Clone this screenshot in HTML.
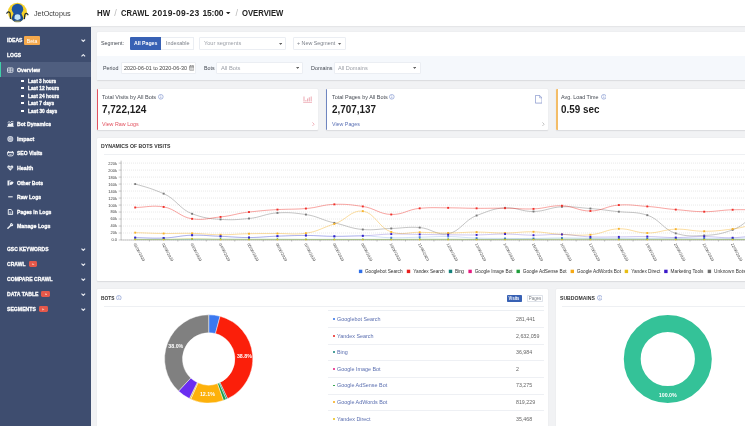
<!DOCTYPE html>
<html><head><meta charset="utf-8"><title>JetOctopus - Overview</title>
<style>
html,body{margin:0;padding:0;}
body{width:745px;height:426px;overflow:hidden;position:relative;background:#f1f2f4;font-family:"Liberation Sans",sans-serif;}
.b{position:absolute;display:block;}
.t{position:absolute;white-space:nowrap;}
#app{position:absolute;left:0;top:0;width:745px;height:426px;transform:translateZ(0);filter:blur(.35px);}
</style></head><body><div id="app">
<div class="b" style="left:-10.00px;top:-10.00px;width:765.00px;height:36.30px;background:#fff;box-shadow:0 .6px 1.600px rgba(40,40,50,.13);z-index:5;"></div>
<svg class="b" style="left:5px;top:1px;z-index:6" width="26" height="25" viewBox="0 0 26 25">
<circle cx="12.4" cy="11.2" r="9.5" fill="#f6d22b"/>
<path d="M1.8 12.3c.8-2 3.2-1.800 3.400.5l.2 4.700" fill="none" stroke="#1d2a33" stroke-width="1.150" stroke-linecap="round"/>
<path d="M23 13.800c-.8-2-3.100-1.800-3.300.5l-.2 3.300" fill="none" stroke="#1d2a33" stroke-width="1.150" stroke-linecap="round"/>
<path d="M6.400 17.400c1.500-3.300 2.200-4.700 2.800-5.800h6.600c.6 1.100 1.300 2.500 2.800 5.800-1.600 2.800-3.800 3.700-6.100 3.700s-4.500-.9-6.100-3.700z" fill="#1c4a8e"/>
<ellipse cx="12.500" cy="8.300" rx="5.700" ry="5.600" fill="#1e55a3"/>
<path d="M9.600 15.400c.2-1.300 1-2.100 2.900-2.100s2.700.8 2.900 2.100l.2 2.200c-.8.900-1.900 1.300-3.100 1.300s-2.300-.4-3.100-1.300z" fill="#c2e4f8"/>
<ellipse cx="12.500" cy="20.400" rx="3.600" ry=".8" fill="#8a8f6a"/>
</svg>
<span class="t" style="top:9.68px;font-size:7.45px;line-height:8.94px;color:#3c3c3c;left:33.80px;transform:scaleX(0.971);transform-origin:0 50%;z-index:6;">JetOctopus</span>
<span class="t" style="top:8.00px;font-size:8.50px;line-height:10.20px;color:#222;font-weight:bold;left:97.30px;transform:scaleX(0.925);transform-origin:0 50%;z-index:6;">HW</span>
<span class="t" style="top:7.70px;font-size:9.00px;line-height:10.80px;color:#bbb;left:114.30px;z-index:6;">/</span>
<span class="t" style="top:8.00px;font-size:8.50px;line-height:10.20px;color:#222;font-weight:bold;left:121.30px;transform:scaleX(0.902);transform-origin:0 50%;z-index:6;">CRAWL</span>
<span class="t" style="top:8.00px;font-size:8.50px;line-height:10.20px;color:#222;font-weight:bold;letter-spacing:0.391px;left:152.30px;z-index:6;">2019-09-23</span>
<span class="t" style="top:8.00px;font-size:8.50px;line-height:10.20px;color:#222;font-weight:bold;letter-spacing:-0.210px;left:202.50px;z-index:6;">15:00</span>
<svg class="b" style="left:226.40px;top:11.90px;z-index:6;" width="4.4" height="2.4" viewBox="0 0 4.4 2.4"><path d="M0 0h4.400L2.200 2.400z" fill="#222"/></svg>
<span class="t" style="top:7.70px;font-size:9.00px;line-height:10.80px;color:#bbb;left:235.40px;z-index:6;">/</span>
<span class="t" style="top:8.00px;font-size:8.50px;line-height:10.20px;color:#222;font-weight:bold;left:242.00px;transform:scaleX(0.905);transform-origin:0 50%;z-index:6;">OVERVIEW</span>
<div class="b" style="left:-10.00px;top:26.70px;width:100.60px;height:420.00px;background:#3e4d6f;z-index:4;"></div>
<span class="t" style="top:37.15px;font-size:5.83px;line-height:7.00px;color:#fff;font-weight:bold;-webkit-text-stroke:0.3px #fff;left:7.00px;transform:scaleX(0.870);transform-origin:0 50%;z-index:6;">IDEAS</span>
<svg class="b" style="left:81.10px;top:39.10px;z-index:6;" width="4.6" height="3" viewBox="0 0 4.6 3"><path d="M.5.7L2.300 2.400L4.100.7" fill="none" stroke="#eef1f6" stroke-width="1.150"/></svg>
<div class="b" style="left:23.90px;top:36.10px;width:15.70px;height:8.50px;background:#f5a94d;border-radius:1px;z-index:6;"></div>
<span class="t" style="top:37.53px;font-size:5.36px;line-height:6.43px;color:#fff;left:-68.20px;width:200px;text-align:center;transform:scaleX(0.952);transform-origin:50% 50%;z-index:7;">Beta</span>
<span class="t" style="top:52.12px;font-size:5.72px;line-height:6.87px;color:#fff;font-weight:bold;-webkit-text-stroke:0.3px #fff;left:7.00px;transform:scaleX(0.870);transform-origin:0 50%;z-index:6;">LOGS</span>
<svg class="b" style="left:81.10px;top:54.00px;z-index:6;" width="4.6" height="3" viewBox="0 0 4.6 3"><path d="M.5 2.400L2.300.7L4.100 2.400" fill="none" stroke="#eef1f6" stroke-width="1.150"/></svg>
<div class="b" style="left:-10.00px;top:62.20px;width:100.60px;height:15.10px;background:#4f5e7f;z-index:5;"></div>
<div class="b" style="left:-10.00px;top:62.20px;width:11.20px;height:15.10px;background:#3fd0a8;z-index:6;"></div>
<svg class="b" style="left:7.00px;top:67.00px;z-index:6;" width="6.8" height="6" viewBox="0 0 6.8 6"><rect x=".45" y=".95" width="5.500" height="4.300" rx=".5" fill="none" stroke="#eef1f6" stroke-width=".8"/><path d="M.4 3.100h5.600" stroke="#eef1f6" stroke-width=".7"/><path d="M3.200.9v4.400" stroke="#eef1f6" stroke-width=".7"/></svg>
<span class="t" style="top:66.77px;font-size:5.97px;line-height:7.17px;color:#fff;font-weight:bold;-webkit-text-stroke:0.3px #fff;left:16.60px;transform:scaleX(0.870);transform-origin:0 50%;z-index:6;">Overview</span>
<svg class="b" style="left:7.00px;top:121.10px;z-index:6;" width="6.8" height="6" viewBox="0 0 6.8 6"><path d="M.1 5.650h6.700" stroke="#eef1f6" stroke-width=".8"/><path d="M.8 5.300V3.300l1.300-1 1.400.8 1.600-1.500 1.200.7v3z" fill="#eef1f6"/><path d="M.6 1.700L2 .6l1.400.9L5.100.1l1.400.7" fill="none" stroke="#eef1f6" stroke-width=".8"/></svg>
<span class="t" style="top:120.92px;font-size:5.88px;line-height:7.06px;color:#fff;font-weight:bold;-webkit-text-stroke:0.3px #fff;left:16.60px;transform:scaleX(0.870);transform-origin:0 50%;z-index:6;">Bot Dynamics</span>
<svg class="b" style="left:7.00px;top:135.80px;z-index:6;" width="6.8" height="6" viewBox="0 0 6.8 6"><circle cx="3.300" cy="3" r="3" fill="#cdd3df"/><circle cx="3.300" cy="3" r="1.700" fill="none" stroke="#7885a0" stroke-width=".55"/><circle cx="3.300" cy="3" r=".55" fill="#7885a0"/></svg>
<span class="t" style="top:135.47px;font-size:6.14px;line-height:7.36px;color:#fff;font-weight:bold;-webkit-text-stroke:0.3px #fff;left:16.60px;transform:scaleX(0.870);transform-origin:0 50%;z-index:6;">Impact</span>
<svg class="b" style="left:7.00px;top:150.60px;z-index:6;" width="6.8" height="6" viewBox="0 0 6.8 6"><path d="M.6 1.100h5.700v2.400c0 .8-.6 1.400-1.400 1.400H2c-.8 0-1.400-.6-1.400-1.400z" fill="none" stroke="#eef1f6" stroke-width=".9"/><path d="M.6 1.100h5.700v1H.6z" fill="#eef1f6"/><path d="M1.500 0v1.200M5.400 0v1.200" stroke="#eef1f6" stroke-width=".9"/><path d="M2.200 3.100c.7.600 1.800.600 2.500 0" fill="none" stroke="#eef1f6" stroke-width=".65"/></svg>
<span class="t" style="top:150.47px;font-size:5.80px;line-height:6.96px;color:#fff;font-weight:bold;-webkit-text-stroke:0.3px #fff;left:16.60px;transform:scaleX(0.870);transform-origin:0 50%;z-index:6;">SEO Visits</span>
<svg class="b" style="left:7.00px;top:164.60px;z-index:6;" width="6.8" height="6" viewBox="0 0 6.8 6"><path d="M3.300 5.700L.7 3.100C-.3 1.900.5.300 1.800.4c.7 0 1.200.5 1.500 1 .3-.5.800-1 1.500-1 1.300-.1 2.100 1.500 1.100 2.700z" fill="#e3e7ee"/><path d="M1.300 2.900h1.200l.5-.9.700 1.600.5-.7h1" fill="none" stroke="#3c4b6c" stroke-width=".4"/></svg>
<span class="t" style="top:164.27px;font-size:6.13px;line-height:7.36px;color:#fff;font-weight:bold;-webkit-text-stroke:0.3px #fff;left:16.60px;transform:scaleX(0.870);transform-origin:0 50%;z-index:6;">Health</span>
<svg class="b" style="left:7.00px;top:179.70px;z-index:6;" width="6.8" height="6" viewBox="0 0 6.8 6"><path d="M.5.500h1.900v5H.5z" fill="#eef1f6"/><path d="M2.800 3c.9-1.700 2.700-2 3.800-.8-.5 1.900-2.100 3-3.800 2.600z" fill="#eef1f6"/><path d="M1.900 1.200c.8-.7 1.500-.7 2.200 0" fill="none" stroke="#eef1f6" stroke-width=".6"/></svg>
<span class="t" style="top:179.56px;font-size:5.81px;line-height:6.97px;color:#fff;font-weight:bold;-webkit-text-stroke:0.3px #fff;left:16.60px;transform:scaleX(0.870);transform-origin:0 50%;z-index:6;">Other Bots</span>
<svg class="b" style="left:7.00px;top:194.40px;z-index:6;" width="6.8" height="6" viewBox="0 0 6.8 6"><path d="M1.200 2.800h4.500" stroke="#dfe3ea" stroke-width="1.200"/></svg>
<span class="t" style="top:194.23px;font-size:5.87px;line-height:7.04px;color:#fff;font-weight:bold;-webkit-text-stroke:0.3px #fff;left:16.60px;transform:scaleX(0.870);transform-origin:0 50%;z-index:6;">Raw Logs</span>
<svg class="b" style="left:7.00px;top:209.00px;z-index:6;" width="6.8" height="6" viewBox="0 0 6.8 6"><path d="M1.300.500h2.700l1.600 1.600v3.500H1.300z" fill="none" stroke="#eef1f6" stroke-width=".95"/><path d="M2.300 3.100h2.300M2.300 4.300h2.300" stroke="#eef1f6" stroke-width=".6"/></svg>
<span class="t" style="top:208.85px;font-size:5.84px;line-height:7.00px;color:#fff;font-weight:bold;-webkit-text-stroke:0.3px #fff;left:16.60px;transform:scaleX(0.870);transform-origin:0 50%;z-index:6;">Pages in Logs</span>
<svg class="b" style="left:7.00px;top:223.40px;z-index:6;" width="6.8" height="6" viewBox="0 0 6.8 6"><path d="M.9 5.200L3.700 2.400" stroke="#eef1f6" stroke-width="1.400" stroke-linecap="round"/><circle cx="4.600" cy="1.700" r="1.600" fill="#eef1f6"/><path d="M4.700 1.600L6.400 -.1" stroke="#3e4d6f" stroke-width=".9"/></svg>
<span class="t" style="top:223.14px;font-size:6.01px;line-height:7.21px;color:#fff;font-weight:bold;-webkit-text-stroke:0.3px #fff;left:16.60px;transform:scaleX(0.870);transform-origin:0 50%;z-index:6;">Manage Logs</span>
<div class="b" style="left:21.30px;top:79.70px;width:2.40px;height:2.30px;background:#fff;z-index:6;"></div>
<span class="t" style="top:77.88px;font-size:5.45px;line-height:6.54px;color:#fff;font-weight:bold;-webkit-text-stroke:0.3px #fff;left:27.80px;transform:scaleX(0.870);transform-origin:0 50%;z-index:6;">Last 3 hours</span>
<div class="b" style="left:21.30px;top:87.20px;width:2.40px;height:2.30px;background:#fff;z-index:6;"></div>
<span class="t" style="top:85.33px;font-size:5.54px;line-height:6.64px;color:#fff;font-weight:bold;-webkit-text-stroke:0.3px #fff;left:27.80px;transform:scaleX(0.870);transform-origin:0 50%;z-index:6;">Last 12 hours</span>
<div class="b" style="left:21.30px;top:94.70px;width:2.40px;height:2.30px;background:#fff;z-index:6;"></div>
<span class="t" style="top:92.83px;font-size:5.54px;line-height:6.64px;color:#fff;font-weight:bold;-webkit-text-stroke:0.3px #fff;left:27.80px;transform:scaleX(0.870);transform-origin:0 50%;z-index:6;">Last 24 hours</span>
<div class="b" style="left:21.30px;top:102.10px;width:2.40px;height:2.30px;background:#fff;z-index:6;"></div>
<span class="t" style="top:100.23px;font-size:5.53px;line-height:6.64px;color:#fff;font-weight:bold;-webkit-text-stroke:0.3px #fff;left:27.80px;transform:scaleX(0.870);transform-origin:0 50%;z-index:6;">Last 7 days</span>
<div class="b" style="left:21.30px;top:109.60px;width:2.40px;height:2.30px;background:#fff;z-index:6;"></div>
<span class="t" style="top:107.68px;font-size:5.61px;line-height:6.73px;color:#fff;font-weight:bold;-webkit-text-stroke:0.3px #fff;left:27.80px;transform:scaleX(0.870);transform-origin:0 50%;z-index:6;">Last 30 days</span>
<span class="t" style="top:246.11px;font-size:5.73px;line-height:6.87px;color:#fff;font-weight:bold;-webkit-text-stroke:0.3px #fff;left:7.00px;transform:scaleX(0.870);transform-origin:0 50%;z-index:6;">GSC KEYWORDS</span>
<svg class="b" style="left:81.10px;top:248.00px;z-index:6;" width="4.6" height="3" viewBox="0 0 4.6 3"><path d="M.5.7L2.300 2.400L4.100.7" fill="none" stroke="#eef1f6" stroke-width="1.150"/></svg>
<span class="t" style="top:260.77px;font-size:5.80px;line-height:6.96px;color:#fff;font-weight:bold;-webkit-text-stroke:0.3px #fff;left:7.00px;transform:scaleX(0.870);transform-origin:0 50%;z-index:6;">CRAWL</span>
<svg class="b" style="left:81.10px;top:262.70px;z-index:6;" width="4.6" height="3" viewBox="0 0 4.6 3"><path d="M.5.7L2.300 2.400L4.100.7" fill="none" stroke="#eef1f6" stroke-width="1.150"/></svg>
<span class="t" style="top:275.94px;font-size:5.85px;line-height:7.02px;color:#fff;font-weight:bold;-webkit-text-stroke:0.3px #fff;left:7.00px;transform:scaleX(0.870);transform-origin:0 50%;z-index:6;">COMPARE CRAWL</span>
<svg class="b" style="left:81.10px;top:277.90px;z-index:6;" width="4.6" height="3" viewBox="0 0 4.6 3"><path d="M.5.7L2.300 2.400L4.100.7" fill="none" stroke="#eef1f6" stroke-width="1.150"/></svg>
<span class="t" style="top:290.90px;font-size:5.91px;line-height:7.09px;color:#fff;font-weight:bold;-webkit-text-stroke:0.3px #fff;left:7.00px;transform:scaleX(0.870);transform-origin:0 50%;z-index:6;">DATA TABLE</span>
<svg class="b" style="left:81.10px;top:292.90px;z-index:6;" width="4.6" height="3" viewBox="0 0 4.6 3"><path d="M.5.7L2.300 2.400L4.100.7" fill="none" stroke="#eef1f6" stroke-width="1.150"/></svg>
<span class="t" style="top:306.10px;font-size:5.92px;line-height:7.11px;color:#fff;font-weight:bold;-webkit-text-stroke:0.3px #fff;left:7.00px;transform:scaleX(0.870);transform-origin:0 50%;z-index:6;">SEGMENTS</span>
<svg class="b" style="left:81.10px;top:308.10px;z-index:6;" width="4.6" height="3" viewBox="0 0 4.6 3"><path d="M.5.7L2.300 2.400L4.100.7" fill="none" stroke="#eef1f6" stroke-width="1.150"/></svg>
<div class="b" style="left:28.50px;top:260.90px;width:8.90px;height:6.00px;background:#e4584b;border-radius:1.400px;z-index:6;"></div>
<svg class="b" style="left:31.80px;top:262.50px;z-index:7;" width="2.8" height="2.8" viewBox="0 0 2.8 2.8"><path d="M.2.200L2.600 1.400L.2 2.600z" fill="#f6b9a6"/></svg>
<div class="b" style="left:41.30px;top:291.10px;width:8.90px;height:6.00px;background:#e4584b;border-radius:1.400px;z-index:6;"></div>
<svg class="b" style="left:44.60px;top:292.70px;z-index:7;" width="2.8" height="2.8" viewBox="0 0 2.8 2.8"><path d="M.2.200L2.600 1.400L.2 2.600z" fill="#f6b9a6"/></svg>
<div class="b" style="left:39.10px;top:306.30px;width:8.90px;height:6.00px;background:#e4584b;border-radius:1.400px;z-index:6;"></div>
<svg class="b" style="left:42.40px;top:307.90px;z-index:7;" width="2.8" height="2.8" viewBox="0 0 2.8 2.8"><path d="M.2.200L2.600 1.400L.2 2.600z" fill="#f6b9a6"/></svg>
<div class="b" style="left:96.80px;top:32.30px;width:650.00px;height:47.70px;background:#fff;box-shadow:0 .4px 1.200px rgba(60,60,70,.13);border-radius:1px;"></div>
<div class="b" style="left:96.80px;top:55.60px;width:650.00px;height:24.40px;background:#f5f8fc;"></div>
<span class="t" style="top:39.77px;font-size:5.80px;line-height:6.96px;color:#41464f;left:100.80px;transform:scaleX(0.926);transform-origin:0 50%;">Segment:</span>
<div class="b" style="left:129.60px;top:37.00px;width:31.80px;height:12.90px;background:#3861b4;border-radius:1px 0 0 1px;"></div>
<span class="t" style="top:39.95px;font-size:6.00px;line-height:7.20px;color:#fff;font-weight:bold;left:133.70px;transform:scaleX(0.866);transform-origin:0 50%;">All Pages</span>
<div class="b" style="left:161.40px;top:37.00px;width:32.70px;height:12.90px;background:#fff;box-sizing:border-box;border:.55px solid #ebeef3;border-left:none;"></div>
<span class="t" style="top:40.07px;font-size:5.80px;line-height:6.96px;color:#7a7f88;left:165.90px;transform:scaleX(0.934);transform-origin:0 50%;">Indexable</span>
<div class="b" style="left:199.30px;top:36.80px;width:86.90px;height:13.00px;background:#fff;box-sizing:border-box;border:.55px solid #ebeef3;border-radius:1px;"></div>
<span class="t" style="top:40.07px;font-size:5.80px;line-height:6.96px;color:#9a9ea6;left:204.10px;transform:scaleX(0.967);transform-origin:0 50%;">Your segments</span>
<svg class="b" style="left:278.50px;top:42.50px;" width="3.2" height="2" viewBox="0 0 3.2 2"><path d="M0 0h3.200L1.600 2z" fill="#666"/></svg>
<div class="b" style="left:292.60px;top:36.80px;width:53.00px;height:13.00px;background:#fff;box-sizing:border-box;border:.55px solid #ebeef3;border-radius:1px;"></div>
<span class="t" style="top:40.07px;font-size:5.80px;line-height:6.96px;color:#7a7f88;left:296.80px;transform:scaleX(0.922);transform-origin:0 50%;">+ New Segment</span>
<svg class="b" style="left:338.40px;top:42.50px;" width="3.2" height="2" viewBox="0 0 3.2 2"><path d="M0 0h3.200L1.600 2z" fill="#666"/></svg>
<span class="t" style="top:64.87px;font-size:5.80px;line-height:6.96px;color:#41464f;left:103.20px;transform:scaleX(0.918);transform-origin:0 50%;">Period</span>
<div class="b" style="left:120.50px;top:61.50px;width:75.70px;height:12.80px;background:#fff;box-sizing:border-box;border:.55px solid #ebeef3;border-radius:1px;"></div>
<span class="t" style="top:64.57px;font-size:5.80px;line-height:6.96px;color:#444;left:124.00px;transform:scaleX(0.935);transform-origin:0 50%;">2020-06-01 to 2020-06-30</span>
<svg class="b" style="left:188.70px;top:65.00px;" width="5.4" height="5.6" viewBox="0 0 5.4 5.6"><rect x=".4" y=".9" width="4.600" height="4.300" rx=".5" fill="none" stroke="#777" stroke-width=".65"/><path d="M.4 2h4.600" stroke="#777" stroke-width=".9"/><path d="M1.500 0v1.300M3.900 0v1.300" stroke="#777" stroke-width=".65"/><path d="M1.100 3.100h3.300M1.100 4.100h3.300" stroke="#777" stroke-width=".5" stroke-dasharray=".7 .5"/></svg>
<span class="t" style="top:64.87px;font-size:5.80px;line-height:6.96px;color:#41464f;left:204.10px;transform:scaleX(0.913);transform-origin:0 50%;">Bots</span>
<div class="b" style="left:216.30px;top:61.50px;width:87.00px;height:12.80px;background:#fff;box-sizing:border-box;border:.55px solid #ebeef3;border-radius:1px;"></div>
<span class="t" style="top:64.87px;font-size:5.80px;line-height:6.96px;color:#9a9ea6;left:221.10px;transform:scaleX(0.992);transform-origin:0 50%;">All Bots</span>
<svg class="b" style="left:295.60px;top:67.00px;" width="3.2" height="2" viewBox="0 0 3.2 2"><path d="M0 0h3.200L1.600 2z" fill="#666"/></svg>
<span class="t" style="top:64.87px;font-size:5.80px;line-height:6.96px;color:#41464f;left:310.80px;transform:scaleX(0.935);transform-origin:0 50%;">Domains</span>
<div class="b" style="left:333.60px;top:61.50px;width:87.00px;height:12.80px;background:#fff;box-sizing:border-box;border:.55px solid #ebeef3;border-radius:1px;"></div>
<span class="t" style="top:64.87px;font-size:5.80px;line-height:6.96px;color:#9a9ea6;left:338.40px;transform:scaleX(0.960);transform-origin:0 50%;">All Domains</span>
<svg class="b" style="left:412.90px;top:67.00px;" width="3.2" height="2" viewBox="0 0 3.2 2"><path d="M0 0h3.200L1.600 2z" fill="#666"/></svg>
<div class="b" style="left:96.70px;top:88.70px;width:221.50px;height:41.50px;background:#fff;box-shadow:0 .4px 1.200px rgba(60,60,70,.13);border-radius:1px;"></div>
<div class="b" style="left:96.70px;top:88.70px;width:1.30px;height:41.50px;background:#e2525f;border-radius:1px 0 0 1px;"></div>
<span class="t" style="top:94.03px;font-size:5.87px;line-height:7.05px;color:#454a53;left:102.30px;transform:scaleX(0.952);transform-origin:0 50%;">Total Visits by All Bots</span>
<svg class="b" style="left:158.40px;top:94.40px;" width="5.6" height="5.6" viewBox="0 0 5.6 5.6"><circle cx="2.8" cy="2.8" r="2.35" fill="none" stroke="#6d84c8" stroke-width=".55"/><path d="M2.8 2.5v1.7" stroke="#6d84c8" stroke-width=".6"/><circle cx="2.8" cy="1.6" r=".38" fill="#6d84c8"/></svg>
<span class="t" style="top:102.54px;font-size:10.68px;line-height:12.81px;color:#1c1c1c;font-weight:bold;left:102.30px;transform:scaleX(0.935);transform-origin:0 50%;">7,722,124</span>
<span class="t" style="top:121.19px;font-size:5.61px;line-height:6.73px;color:#e2525f;left:102.30px;transform:scaleX(0.952);transform-origin:0 50%;">View Raw Logs</span>
<div class="b" style="left:326.10px;top:88.70px;width:222.10px;height:41.50px;background:#fff;box-shadow:0 .4px 1.200px rgba(60,60,70,.13);border-radius:1px;"></div>
<div class="b" style="left:326.10px;top:88.70px;width:1.40px;height:41.50px;background:#6f86c0;border-radius:1px 0 0 1px;"></div>
<span class="t" style="top:94.10px;font-size:5.75px;line-height:6.90px;color:#454a53;left:331.70px;transform:scaleX(0.952);transform-origin:0 50%;">Total Pages by All Bots</span>
<svg class="b" style="left:389.20px;top:94.40px;" width="5.6" height="5.6" viewBox="0 0 5.6 5.6"><circle cx="2.8" cy="2.8" r="2.35" fill="none" stroke="#6d84c8" stroke-width=".55"/><path d="M2.8 2.5v1.7" stroke="#6d84c8" stroke-width=".6"/><circle cx="2.8" cy="1.6" r=".38" fill="#6d84c8"/></svg>
<span class="t" style="top:102.60px;font-size:10.58px;line-height:12.70px;color:#1c1c1c;font-weight:bold;left:331.70px;transform:scaleX(0.935);transform-origin:0 50%;">2,707,137</span>
<span class="t" style="top:121.21px;font-size:5.57px;line-height:6.68px;color:#5a70b5;left:331.70px;transform:scaleX(0.952);transform-origin:0 50%;">View Pages</span>
<div class="b" style="left:556.10px;top:88.70px;width:190.00px;height:41.50px;background:#fff;box-shadow:0 .4px 1.200px rgba(60,60,70,.13);border-radius:1px;"></div>
<div class="b" style="left:556.10px;top:88.70px;width:1.50px;height:41.50px;background:#f3bd68;border-radius:1px 0 0 1px;"></div>
<span class="t" style="top:94.14px;font-size:5.68px;line-height:6.82px;color:#454a53;left:561.20px;transform:scaleX(0.952);transform-origin:0 50%;">Avg. Load Time</span>
<svg class="b" style="left:600.50px;top:94.40px;" width="5.6" height="5.6" viewBox="0 0 5.6 5.6"><circle cx="2.8" cy="2.8" r="2.35" fill="none" stroke="#6d84c8" stroke-width=".55"/><path d="M2.8 2.5v1.7" stroke="#6d84c8" stroke-width=".6"/><circle cx="2.8" cy="1.6" r=".38" fill="#6d84c8"/></svg>
<span class="t" style="top:102.62px;font-size:10.56px;line-height:12.67px;color:#1c1c1c;font-weight:bold;left:561.20px;transform:scaleX(0.935);transform-origin:0 50%;">0.59 sec</span>
<svg class="b" style="left:303.40px;top:95.70px;" width="9.2" height="7" viewBox="0 0 9.2 7"><path d="M.2 6.600h8.800" stroke="#e58c98" stroke-width=".6"/><path d="M1 .5v5M2.900 4v1.500M4.600 2.500v3M6.300 1.300v4.200M8.200.5v5" fill="none" stroke="#e58c98" stroke-width=".75"/></svg>
<svg class="b" style="left:312.30px;top:121.60px;" width="2.8" height="4.4" viewBox="0 0 2.8 4.4"><path d="M.4.400L2.200 2.200L.4 4" fill="none" stroke="#ea95a0" stroke-width=".7"/></svg>
<svg class="b" style="left:535.00px;top:95.10px;" width="7.4" height="8.5" viewBox="0 0 7.4 8.5"><path d="M.4.400h4.200l2.400 2.400v5.300H.4z" fill="none" stroke="#8494cb" stroke-width=".75"/><path d="M4.600.4v2.400h2.400" fill="none" stroke="#8494cb" stroke-width=".6"/></svg>
<svg class="b" style="left:541.80px;top:121.60px;" width="2.8" height="4.4" viewBox="0 0 2.8 4.4"><path d="M.4.400L2.200 2.200L.4 4" fill="none" stroke="#aaa" stroke-width=".7"/></svg>
<div class="b" style="left:96.80px;top:138.30px;width:650.00px;height:142.90px;background:#fff;box-shadow:0 .4px 1.200px rgba(60,60,70,.13);border-radius:1px;"></div>
<span class="t" style="top:142.89px;font-size:5.93px;line-height:7.11px;color:#333;font-weight:bold;left:101.10px;transform:scaleX(0.870);transform-origin:0 50%;">DYNAMICS OF BOTS VISITS</span>
<div class="b" style="left:104.00px;top:153.90px;width:642.00px;height:0.60px;background:#eef0f3;"></div>
<svg class="b" style="left:0;top:0" width="745" height="426" viewBox="0 0 745 426"><path d="M121.1 240.00H745" stroke="#c0c0c0" stroke-width=".5" stroke-dasharray=".7 1.300"/><path d="M118.70 240.00h2.400" stroke="#777" stroke-width=".4"/><text x="116.90" y="241.45" font-size="3.950" fill="#3a3a3a" text-anchor="end" font-family="Liberation Sans, sans-serif">0.0</text><path d="M121.1 233.01H745" stroke="#c0c0c0" stroke-width=".5" stroke-dasharray=".7 1.300"/><path d="M118.70 233.01h2.400" stroke="#777" stroke-width=".4"/><text x="116.90" y="234.46" font-size="3.950" fill="#3a3a3a" text-anchor="end" font-family="Liberation Sans, sans-serif">20k</text><path d="M121.1 226.02H745" stroke="#c0c0c0" stroke-width=".5" stroke-dasharray=".7 1.300"/><path d="M118.70 226.02h2.400" stroke="#777" stroke-width=".4"/><text x="116.90" y="227.47" font-size="3.950" fill="#3a3a3a" text-anchor="end" font-family="Liberation Sans, sans-serif">40k</text><path d="M121.1 219.03H745" stroke="#c0c0c0" stroke-width=".5" stroke-dasharray=".7 1.300"/><path d="M118.70 219.03h2.400" stroke="#777" stroke-width=".4"/><text x="116.90" y="220.48" font-size="3.950" fill="#3a3a3a" text-anchor="end" font-family="Liberation Sans, sans-serif">60k</text><path d="M121.1 212.04H745" stroke="#c0c0c0" stroke-width=".5" stroke-dasharray=".7 1.300"/><path d="M118.70 212.04h2.400" stroke="#777" stroke-width=".4"/><text x="116.90" y="213.49" font-size="3.950" fill="#3a3a3a" text-anchor="end" font-family="Liberation Sans, sans-serif">80k</text><path d="M121.1 205.05H745" stroke="#c0c0c0" stroke-width=".5" stroke-dasharray=".7 1.300"/><path d="M118.70 205.05h2.400" stroke="#777" stroke-width=".4"/><text x="116.90" y="206.50" font-size="3.950" fill="#3a3a3a" text-anchor="end" font-family="Liberation Sans, sans-serif">100k</text><path d="M121.1 198.05H745" stroke="#c0c0c0" stroke-width=".5" stroke-dasharray=".7 1.300"/><path d="M118.70 198.05h2.400" stroke="#777" stroke-width=".4"/><text x="116.90" y="199.50" font-size="3.950" fill="#3a3a3a" text-anchor="end" font-family="Liberation Sans, sans-serif">120k</text><path d="M121.1 191.06H745" stroke="#c0c0c0" stroke-width=".5" stroke-dasharray=".7 1.300"/><path d="M118.70 191.06h2.400" stroke="#777" stroke-width=".4"/><text x="116.90" y="192.51" font-size="3.950" fill="#3a3a3a" text-anchor="end" font-family="Liberation Sans, sans-serif">140k</text><path d="M121.1 184.07H745" stroke="#c0c0c0" stroke-width=".5" stroke-dasharray=".7 1.300"/><path d="M118.70 184.07h2.400" stroke="#777" stroke-width=".4"/><text x="116.90" y="185.52" font-size="3.950" fill="#3a3a3a" text-anchor="end" font-family="Liberation Sans, sans-serif">160k</text><path d="M121.1 177.08H745" stroke="#c0c0c0" stroke-width=".5" stroke-dasharray=".7 1.300"/><path d="M118.70 177.08h2.400" stroke="#777" stroke-width=".4"/><text x="116.90" y="178.53" font-size="3.950" fill="#3a3a3a" text-anchor="end" font-family="Liberation Sans, sans-serif">180k</text><path d="M121.1 170.09H745" stroke="#c0c0c0" stroke-width=".5" stroke-dasharray=".7 1.300"/><path d="M118.70 170.09h2.400" stroke="#777" stroke-width=".4"/><text x="116.90" y="171.54" font-size="3.950" fill="#3a3a3a" text-anchor="end" font-family="Liberation Sans, sans-serif">200k</text><path d="M121.1 163.10H745" stroke="#c0c0c0" stroke-width=".5" stroke-dasharray=".7 1.300"/><path d="M118.70 163.10h2.400" stroke="#777" stroke-width=".4"/><text x="116.90" y="164.55" font-size="3.950" fill="#3a3a3a" text-anchor="end" font-family="Liberation Sans, sans-serif">220k</text><path d="M121.1 160.65V240.0H745" fill="none" stroke="#888" stroke-width=".5"/><path d="M135.20 184.07C147.15 187.29 151.70 188.66 163.65 193.65C175.60 198.64 180.15 209.46 192.10 213.78C204.05 218.11 208.60 218.58 220.55 219.38C232.50 220.17 237.05 219.60 249.00 218.50C260.95 217.41 265.50 213.54 277.45 212.88C289.40 212.21 293.95 212.87 305.90 214.55C317.85 216.23 322.40 220.36 334.35 222.87C346.30 225.39 350.85 228.57 362.80 229.51C374.75 230.45 379.30 228.79 391.25 228.47C403.20 228.14 407.75 226.68 419.70 227.56C431.65 228.44 436.20 235.73 448.15 233.71C460.10 231.69 464.65 219.88 476.60 215.53C488.55 211.19 493.10 208.52 505.05 207.84C517.00 207.17 521.55 211.69 533.50 211.51C545.45 211.34 550.00 207.29 561.95 206.79C573.90 206.29 578.45 207.72 590.40 208.54C602.35 209.36 606.90 210.57 618.85 211.69C630.80 212.80 635.35 211.54 647.30 215.18C659.25 218.82 663.80 229.95 675.75 233.36C687.70 236.76 692.25 236.04 704.20 235.46C716.15 234.87 720.70 234.09 732.65 229.86C744.60 225.64 749.15 216.87 761.10 210.29" fill="none" stroke="#7a7a7a" stroke-width=".55" stroke-opacity="0.8"/><path d="M135.20 207.49C147.15 207.30 151.70 205.03 163.65 206.93C175.60 208.84 180.15 217.14 192.10 218.82C204.05 220.50 208.60 218.07 220.55 216.93C232.50 215.79 237.05 213.27 249.00 212.04C260.95 210.80 265.50 210.18 277.45 209.59C289.40 209.00 293.95 209.42 305.90 208.54C317.85 207.66 322.40 204.70 334.35 204.35C346.30 203.99 350.85 204.74 362.80 206.44C374.75 208.15 379.30 214.17 391.25 214.48C403.20 214.80 407.75 209.45 419.70 208.33C431.65 207.22 436.20 207.84 448.15 207.84C460.10 207.84 464.65 208.27 476.60 208.33C488.55 208.39 493.10 208.10 505.05 208.19C517.00 208.29 521.55 209.30 533.50 208.89C545.45 208.48 550.00 205.39 561.95 205.74C573.90 206.10 578.45 211.11 590.40 210.99C602.35 210.87 606.90 205.81 618.85 205.05C630.80 204.28 635.35 205.68 647.30 206.44C659.25 207.21 663.80 208.71 675.75 209.59C687.70 210.47 692.25 211.66 704.20 211.69C716.15 211.72 720.70 210.06 732.65 209.76C744.60 209.47 749.15 209.88 761.10 209.94" fill="none" stroke="#f0302a" stroke-width=".55" stroke-opacity="0.8"/><path d="M135.20 232.66C147.15 232.94 151.70 233.38 163.65 233.50C175.60 233.62 180.15 233.15 192.10 233.36C204.05 233.57 208.60 234.70 220.55 234.76C232.50 234.82 237.05 233.92 249.00 233.71C260.95 233.50 265.50 233.58 277.45 233.50C289.40 233.42 293.95 234.83 305.90 233.22C317.85 231.61 322.40 227.63 334.35 223.92C346.30 220.22 350.85 209.81 362.80 211.16C374.75 212.51 379.30 228.41 391.25 231.96C403.20 235.51 407.75 232.13 419.70 232.31C431.65 232.49 436.20 233.04 448.15 233.01C460.10 232.97 464.65 232.10 476.60 232.10C488.55 232.10 493.10 233.06 505.05 233.01C517.00 232.96 521.55 231.55 533.50 231.79C545.45 232.02 550.00 233.91 561.95 234.41C573.90 234.91 578.45 235.70 590.40 234.76C602.35 233.82 606.90 229.11 618.85 228.81C630.80 228.52 635.35 232.95 647.30 233.01C659.25 233.07 663.80 229.46 675.75 229.16C687.70 228.87 692.25 231.29 704.20 231.26C716.15 231.23 720.70 230.46 732.65 228.99C744.60 227.52 749.15 224.70 761.10 222.52" fill="none" stroke="#f6b22a" stroke-width=".55" stroke-opacity="0.8"/><path d="M135.20 237.73C147.15 237.83 151.70 238.47 163.65 238.04C175.60 237.62 180.15 235.50 192.10 235.21C204.05 234.92 208.60 235.94 220.55 236.33C232.50 236.72 237.05 237.58 249.00 237.55C260.95 237.52 265.50 236.51 277.45 236.16C289.40 235.80 293.95 235.43 305.90 235.46C317.85 235.49 322.40 236.27 334.35 236.33C346.30 236.39 350.85 235.57 362.80 235.81C374.75 236.04 379.30 237.49 391.25 237.73C403.20 237.96 407.75 237.41 419.70 237.20C431.65 237.00 436.20 236.36 448.15 236.50C460.10 236.65 464.65 237.75 476.60 238.08C488.55 238.40 493.10 238.37 505.05 238.43C517.00 238.49 521.55 238.52 533.50 238.43C545.45 238.34 550.00 237.93 561.95 237.90C573.90 237.87 578.45 238.19 590.40 238.25C602.35 238.31 606.90 238.25 618.85 238.25C630.80 238.25 635.35 238.25 647.30 238.25C659.25 238.25 663.80 238.25 675.75 238.25C687.70 238.25 692.25 238.25 704.20 238.25C716.15 238.25 720.70 238.43 732.65 238.25C744.60 238.08 749.15 237.56 761.10 237.20" fill="none" stroke="#4a7fe0" stroke-width=".55" stroke-opacity="0.45"/><path d="M135.20 237.62C147.15 237.76 151.70 238.45 163.65 238.04C175.60 237.64 180.15 235.50 192.10 235.21C204.05 234.92 208.60 235.94 220.55 236.33C232.50 236.72 237.05 237.58 249.00 237.55C260.95 237.52 265.50 236.51 277.45 236.16C289.40 235.80 293.95 235.43 305.90 235.46C317.85 235.49 322.40 236.27 334.35 236.33C346.30 236.39 350.85 236.19 362.80 235.81C374.75 235.42 379.30 234.29 391.25 234.06C403.20 233.82 407.75 234.29 419.70 234.41C431.65 234.52 436.20 234.67 448.15 234.76C460.10 234.84 464.65 235.05 476.60 234.93C488.55 234.81 493.10 234.01 505.05 234.06C517.00 234.10 521.55 235.15 533.50 235.21C545.45 235.27 550.00 234.13 561.95 234.41C573.90 234.68 578.45 236.44 590.40 236.85C602.35 237.27 606.90 236.91 618.85 236.85C630.80 236.80 635.35 236.39 647.30 236.50C659.25 236.62 663.80 237.55 675.75 237.55C687.70 237.55 692.25 236.48 704.20 236.50C716.15 236.53 720.70 238.08 732.65 237.73C744.60 237.38 749.15 235.52 761.10 234.41" fill="none" stroke="#3a1fc8" stroke-width=".55" stroke-opacity="0.45"/><path d="M135.20 239.30C147.15 239.30 151.70 239.36 163.65 239.30C175.60 239.24 180.15 239.01 192.10 238.95C204.05 238.89 208.60 238.92 220.55 238.95C232.50 238.98 237.05 239.10 249.00 239.13C260.95 239.16 265.50 239.10 277.45 239.13C289.40 239.16 293.95 239.27 305.90 239.30C317.85 239.33 322.40 239.30 334.35 239.30C346.30 239.30 350.85 239.30 362.80 239.30C374.75 239.30 379.30 239.33 391.25 239.30C403.20 239.27 407.75 239.16 419.70 239.13C431.65 239.10 436.20 239.10 448.15 239.13C460.10 239.16 464.65 239.27 476.60 239.30C488.55 239.33 493.10 239.33 505.05 239.30C517.00 239.27 521.55 239.18 533.50 239.13C545.45 239.07 550.00 238.98 561.95 238.95C573.90 238.92 578.45 238.92 590.40 238.95C602.35 238.98 606.90 239.10 618.85 239.13C630.80 239.16 635.35 239.13 647.30 239.13C659.25 239.13 663.80 239.10 675.75 239.13C687.70 239.16 692.25 239.27 704.20 239.30C716.15 239.33 720.70 239.30 732.65 239.30C744.60 239.30 749.15 239.30 761.10 239.30" fill="none" stroke="#2a9d3c" stroke-width=".55" stroke-opacity="0.45"/><path d="M135.20 239.58C147.15 239.58 151.70 239.58 163.65 239.58C175.60 239.58 180.15 239.58 192.10 239.58C204.05 239.58 208.60 239.58 220.55 239.58C232.50 239.58 237.05 239.58 249.00 239.58C260.95 239.58 265.50 239.58 277.45 239.58C289.40 239.58 293.95 239.58 305.90 239.58C317.85 239.58 322.40 239.58 334.35 239.58C346.30 239.58 350.85 239.58 362.80 239.58C374.75 239.58 379.30 239.58 391.25 239.58C403.20 239.58 407.75 239.58 419.70 239.58C431.65 239.58 436.20 239.58 448.15 239.58C460.10 239.58 464.65 239.58 476.60 239.58C488.55 239.58 493.10 239.58 505.05 239.58C517.00 239.58 521.55 239.58 533.50 239.58C545.45 239.58 550.00 239.58 561.95 239.58C573.90 239.58 578.45 239.58 590.40 239.58C602.35 239.58 606.90 239.58 618.85 239.58C630.80 239.58 635.35 239.58 647.30 239.58C659.25 239.58 663.80 239.58 675.75 239.58C687.70 239.58 692.25 239.58 704.20 239.58C716.15 239.58 720.70 239.58 732.65 239.58C744.60 239.58 749.15 239.58 761.10 239.58" fill="none" stroke="#1f8a80" stroke-width=".55" stroke-opacity="0.45"/><path d="M135.20 239.48C147.15 239.51 151.70 239.73 163.65 239.58C175.60 239.43 180.15 238.60 192.10 238.60C204.05 238.60 208.60 239.42 220.55 239.58C232.50 239.74 237.05 239.58 249.00 239.58C260.95 239.58 265.50 239.58 277.45 239.58C289.40 239.58 293.95 239.58 305.90 239.58C317.85 239.58 322.40 239.58 334.35 239.58C346.30 239.58 350.85 239.58 362.80 239.58C374.75 239.58 379.30 239.58 391.25 239.58C403.20 239.58 407.75 239.58 419.70 239.58C431.65 239.58 436.20 239.58 448.15 239.58C460.10 239.58 464.65 239.58 476.60 239.58C488.55 239.58 493.10 239.58 505.05 239.58C517.00 239.58 521.55 239.58 533.50 239.58C545.45 239.58 550.00 239.58 561.95 239.58C573.90 239.58 578.45 239.58 590.40 239.58C602.35 239.58 606.90 239.58 618.85 239.58C630.80 239.58 635.35 239.58 647.30 239.58C659.25 239.58 663.80 239.58 675.75 239.58C687.70 239.58 692.25 239.58 704.20 239.58C716.15 239.58 720.70 239.58 732.65 239.58C744.60 239.58 749.15 239.58 761.10 239.58" fill="none" stroke="#e9c019" stroke-width=".55" stroke-opacity="0.45"/><rect x="134.25" y="183.12" width="1.9" height="1.9" fill="#7a7a7a"/><rect x="162.70" y="192.70" width="1.9" height="1.9" fill="#7a7a7a"/><rect x="191.15" y="212.83" width="1.9" height="1.9" fill="#7a7a7a"/><rect x="219.60" y="218.43" width="1.9" height="1.9" fill="#7a7a7a"/><rect x="248.05" y="217.55" width="1.9" height="1.9" fill="#7a7a7a"/><rect x="276.50" y="211.93" width="1.9" height="1.9" fill="#7a7a7a"/><rect x="304.95" y="213.60" width="1.9" height="1.9" fill="#7a7a7a"/><rect x="333.40" y="221.92" width="1.9" height="1.9" fill="#7a7a7a"/><rect x="361.85" y="228.56" width="1.9" height="1.9" fill="#7a7a7a"/><rect x="390.30" y="227.52" width="1.9" height="1.9" fill="#7a7a7a"/><rect x="418.75" y="226.61" width="1.9" height="1.9" fill="#7a7a7a"/><rect x="447.20" y="232.76" width="1.9" height="1.9" fill="#7a7a7a"/><rect x="475.65" y="214.58" width="1.9" height="1.9" fill="#7a7a7a"/><rect x="504.10" y="206.89" width="1.9" height="1.9" fill="#7a7a7a"/><rect x="532.55" y="210.56" width="1.9" height="1.9" fill="#7a7a7a"/><rect x="561.00" y="205.84" width="1.9" height="1.9" fill="#7a7a7a"/><rect x="589.45" y="207.59" width="1.9" height="1.9" fill="#7a7a7a"/><rect x="617.90" y="210.74" width="1.9" height="1.9" fill="#7a7a7a"/><rect x="646.35" y="214.23" width="1.9" height="1.9" fill="#7a7a7a"/><rect x="674.80" y="232.41" width="1.9" height="1.9" fill="#7a7a7a"/><rect x="703.25" y="234.51" width="1.9" height="1.9" fill="#7a7a7a"/><rect x="731.70" y="228.91" width="1.9" height="1.9" fill="#7a7a7a"/><rect x="760.15" y="209.34" width="1.9" height="1.9" fill="#7a7a7a"/><rect x="134.25" y="206.54" width="1.9" height="1.9" fill="#f0302a"/><rect x="162.70" y="205.98" width="1.9" height="1.9" fill="#f0302a"/><rect x="191.15" y="217.87" width="1.9" height="1.9" fill="#f0302a"/><rect x="219.60" y="215.98" width="1.9" height="1.9" fill="#f0302a"/><rect x="248.05" y="211.09" width="1.9" height="1.9" fill="#f0302a"/><rect x="276.50" y="208.64" width="1.9" height="1.9" fill="#f0302a"/><rect x="304.95" y="207.59" width="1.9" height="1.9" fill="#f0302a"/><rect x="333.40" y="203.40" width="1.9" height="1.9" fill="#f0302a"/><rect x="361.85" y="205.49" width="1.9" height="1.9" fill="#f0302a"/><rect x="390.30" y="213.53" width="1.9" height="1.9" fill="#f0302a"/><rect x="418.75" y="207.38" width="1.9" height="1.9" fill="#f0302a"/><rect x="447.20" y="206.89" width="1.9" height="1.9" fill="#f0302a"/><rect x="475.65" y="207.38" width="1.9" height="1.9" fill="#f0302a"/><rect x="504.10" y="207.24" width="1.9" height="1.9" fill="#f0302a"/><rect x="532.55" y="207.94" width="1.9" height="1.9" fill="#f0302a"/><rect x="561.00" y="204.79" width="1.9" height="1.9" fill="#f0302a"/><rect x="589.45" y="210.04" width="1.9" height="1.9" fill="#f0302a"/><rect x="617.90" y="204.10" width="1.9" height="1.9" fill="#f0302a"/><rect x="646.35" y="205.49" width="1.9" height="1.9" fill="#f0302a"/><rect x="674.80" y="208.64" width="1.9" height="1.9" fill="#f0302a"/><rect x="703.25" y="210.74" width="1.9" height="1.9" fill="#f0302a"/><rect x="731.70" y="208.81" width="1.9" height="1.9" fill="#f0302a"/><rect x="760.15" y="208.99" width="1.9" height="1.9" fill="#f0302a"/><rect x="134.25" y="231.71" width="1.9" height="1.9" fill="#f6b22a"/><rect x="162.70" y="232.55" width="1.9" height="1.9" fill="#f6b22a"/><rect x="191.15" y="232.41" width="1.9" height="1.9" fill="#f6b22a"/><rect x="219.60" y="233.81" width="1.9" height="1.9" fill="#f6b22a"/><rect x="248.05" y="232.76" width="1.9" height="1.9" fill="#f6b22a"/><rect x="276.50" y="232.55" width="1.9" height="1.9" fill="#f6b22a"/><rect x="304.95" y="232.27" width="1.9" height="1.9" fill="#f6b22a"/><rect x="333.40" y="222.97" width="1.9" height="1.9" fill="#f6b22a"/><rect x="361.85" y="210.21" width="1.9" height="1.9" fill="#f6b22a"/><rect x="390.30" y="231.01" width="1.9" height="1.9" fill="#f6b22a"/><rect x="418.75" y="231.36" width="1.9" height="1.9" fill="#f6b22a"/><rect x="447.20" y="232.06" width="1.9" height="1.9" fill="#f6b22a"/><rect x="475.65" y="231.15" width="1.9" height="1.9" fill="#f6b22a"/><rect x="504.10" y="232.06" width="1.9" height="1.9" fill="#f6b22a"/><rect x="532.55" y="230.84" width="1.9" height="1.9" fill="#f6b22a"/><rect x="561.00" y="233.46" width="1.9" height="1.9" fill="#f6b22a"/><rect x="589.45" y="233.81" width="1.9" height="1.9" fill="#f6b22a"/><rect x="617.90" y="227.86" width="1.9" height="1.9" fill="#f6b22a"/><rect x="646.35" y="232.06" width="1.9" height="1.9" fill="#f6b22a"/><rect x="674.80" y="228.21" width="1.9" height="1.9" fill="#f6b22a"/><rect x="703.25" y="230.31" width="1.9" height="1.9" fill="#f6b22a"/><rect x="731.70" y="228.04" width="1.9" height="1.9" fill="#f6b22a"/><rect x="760.15" y="221.57" width="1.9" height="1.9" fill="#f6b22a"/><rect x="134.25" y="236.78" width="1.9" height="1.9" fill="#4a7fe0"/><rect x="162.70" y="237.09" width="1.9" height="1.9" fill="#4a7fe0"/><rect x="191.15" y="234.26" width="1.9" height="1.9" fill="#4a7fe0"/><rect x="219.60" y="235.38" width="1.9" height="1.9" fill="#4a7fe0"/><rect x="248.05" y="236.60" width="1.9" height="1.9" fill="#4a7fe0"/><rect x="276.50" y="235.21" width="1.9" height="1.9" fill="#4a7fe0"/><rect x="304.95" y="234.51" width="1.9" height="1.9" fill="#4a7fe0"/><rect x="333.40" y="235.38" width="1.9" height="1.9" fill="#4a7fe0"/><rect x="361.85" y="234.86" width="1.9" height="1.9" fill="#4a7fe0"/><rect x="390.30" y="236.78" width="1.9" height="1.9" fill="#4a7fe0"/><rect x="418.75" y="236.25" width="1.9" height="1.9" fill="#4a7fe0"/><rect x="447.20" y="235.55" width="1.9" height="1.9" fill="#4a7fe0"/><rect x="475.65" y="237.13" width="1.9" height="1.9" fill="#4a7fe0"/><rect x="504.10" y="237.48" width="1.9" height="1.9" fill="#4a7fe0"/><rect x="532.55" y="237.48" width="1.9" height="1.9" fill="#4a7fe0"/><rect x="561.00" y="236.95" width="1.9" height="1.9" fill="#4a7fe0"/><rect x="589.45" y="237.30" width="1.9" height="1.9" fill="#4a7fe0"/><rect x="617.90" y="237.30" width="1.9" height="1.9" fill="#4a7fe0"/><rect x="646.35" y="237.30" width="1.9" height="1.9" fill="#4a7fe0"/><rect x="674.80" y="237.30" width="1.9" height="1.9" fill="#4a7fe0"/><rect x="703.25" y="237.30" width="1.9" height="1.9" fill="#4a7fe0"/><rect x="731.70" y="237.30" width="1.9" height="1.9" fill="#4a7fe0"/><rect x="760.15" y="236.25" width="1.9" height="1.9" fill="#4a7fe0"/><rect x="134.25" y="236.67" width="1.9" height="1.9" fill="#3a1fc8"/><rect x="162.70" y="237.09" width="1.9" height="1.9" fill="#3a1fc8"/><rect x="191.15" y="234.26" width="1.9" height="1.9" fill="#3a1fc8"/><rect x="219.60" y="235.38" width="1.9" height="1.9" fill="#3a1fc8"/><rect x="248.05" y="236.60" width="1.9" height="1.9" fill="#3a1fc8"/><rect x="276.50" y="235.21" width="1.9" height="1.9" fill="#3a1fc8"/><rect x="304.95" y="234.51" width="1.9" height="1.9" fill="#3a1fc8"/><rect x="333.40" y="235.38" width="1.9" height="1.9" fill="#3a1fc8"/><rect x="361.85" y="234.86" width="1.9" height="1.9" fill="#3a1fc8"/><rect x="390.30" y="233.11" width="1.9" height="1.9" fill="#3a1fc8"/><rect x="418.75" y="233.46" width="1.9" height="1.9" fill="#3a1fc8"/><rect x="447.20" y="233.81" width="1.9" height="1.9" fill="#3a1fc8"/><rect x="475.65" y="233.98" width="1.9" height="1.9" fill="#3a1fc8"/><rect x="504.10" y="233.11" width="1.9" height="1.9" fill="#3a1fc8"/><rect x="532.55" y="234.26" width="1.9" height="1.9" fill="#3a1fc8"/><rect x="561.00" y="233.46" width="1.9" height="1.9" fill="#3a1fc8"/><rect x="589.45" y="235.90" width="1.9" height="1.9" fill="#3a1fc8"/><rect x="617.90" y="235.90" width="1.9" height="1.9" fill="#3a1fc8"/><rect x="646.35" y="235.55" width="1.9" height="1.9" fill="#3a1fc8"/><rect x="674.80" y="236.60" width="1.9" height="1.9" fill="#3a1fc8"/><rect x="703.25" y="235.55" width="1.9" height="1.9" fill="#3a1fc8"/><rect x="731.70" y="236.78" width="1.9" height="1.9" fill="#3a1fc8"/><rect x="760.15" y="233.46" width="1.9" height="1.9" fill="#3a1fc8"/><rect x="134.50" y="238.60" width="1.4" height="1.4" fill="#2a9d3c"/><rect x="162.95" y="238.60" width="1.4" height="1.4" fill="#2a9d3c"/><rect x="191.40" y="238.25" width="1.4" height="1.4" fill="#2a9d3c"/><rect x="219.85" y="238.25" width="1.4" height="1.4" fill="#2a9d3c"/><rect x="248.30" y="238.43" width="1.4" height="1.4" fill="#2a9d3c"/><rect x="276.75" y="238.43" width="1.4" height="1.4" fill="#2a9d3c"/><rect x="305.20" y="238.60" width="1.4" height="1.4" fill="#2a9d3c"/><rect x="333.65" y="238.60" width="1.4" height="1.4" fill="#2a9d3c"/><rect x="362.10" y="238.60" width="1.4" height="1.4" fill="#2a9d3c"/><rect x="390.55" y="238.60" width="1.4" height="1.4" fill="#2a9d3c"/><rect x="419.00" y="238.43" width="1.4" height="1.4" fill="#2a9d3c"/><rect x="447.45" y="238.43" width="1.4" height="1.4" fill="#2a9d3c"/><rect x="475.90" y="238.60" width="1.4" height="1.4" fill="#2a9d3c"/><rect x="504.35" y="238.60" width="1.4" height="1.4" fill="#2a9d3c"/><rect x="532.80" y="238.43" width="1.4" height="1.4" fill="#2a9d3c"/><rect x="561.25" y="238.25" width="1.4" height="1.4" fill="#2a9d3c"/><rect x="589.70" y="238.25" width="1.4" height="1.4" fill="#2a9d3c"/><rect x="618.15" y="238.43" width="1.4" height="1.4" fill="#2a9d3c"/><rect x="646.60" y="238.43" width="1.4" height="1.4" fill="#2a9d3c"/><rect x="675.05" y="238.43" width="1.4" height="1.4" fill="#2a9d3c"/><rect x="703.50" y="238.60" width="1.4" height="1.4" fill="#2a9d3c"/><rect x="731.95" y="238.60" width="1.4" height="1.4" fill="#2a9d3c"/><rect x="760.40" y="238.60" width="1.4" height="1.4" fill="#2a9d3c"/><rect x="134.50" y="238.78" width="1.4" height="1.4" fill="#e9c019"/><rect x="162.95" y="238.88" width="1.4" height="1.4" fill="#e9c019"/><rect x="191.40" y="237.90" width="1.4" height="1.4" fill="#e9c019"/><rect x="219.85" y="238.88" width="1.4" height="1.4" fill="#e9c019"/><rect x="248.30" y="238.88" width="1.4" height="1.4" fill="#e9c019"/><rect x="276.75" y="238.88" width="1.4" height="1.4" fill="#e9c019"/><rect x="305.20" y="238.88" width="1.4" height="1.4" fill="#e9c019"/><rect x="333.65" y="238.88" width="1.4" height="1.4" fill="#e9c019"/><rect x="362.10" y="238.88" width="1.4" height="1.4" fill="#e9c019"/><rect x="390.55" y="238.88" width="1.4" height="1.4" fill="#e9c019"/><rect x="419.00" y="238.88" width="1.4" height="1.4" fill="#e9c019"/><rect x="447.45" y="238.88" width="1.4" height="1.4" fill="#e9c019"/><rect x="475.90" y="238.88" width="1.4" height="1.4" fill="#e9c019"/><rect x="504.35" y="238.88" width="1.4" height="1.4" fill="#e9c019"/><rect x="532.80" y="238.88" width="1.4" height="1.4" fill="#e9c019"/><rect x="561.25" y="238.88" width="1.4" height="1.4" fill="#e9c019"/><rect x="589.70" y="238.88" width="1.4" height="1.4" fill="#e9c019"/><rect x="618.15" y="238.88" width="1.4" height="1.4" fill="#e9c019"/><rect x="646.60" y="238.88" width="1.4" height="1.4" fill="#e9c019"/><rect x="675.05" y="238.88" width="1.4" height="1.4" fill="#e9c019"/><rect x="703.50" y="238.88" width="1.4" height="1.4" fill="#e9c019"/><rect x="731.95" y="238.88" width="1.4" height="1.4" fill="#e9c019"/><rect x="760.40" y="238.88" width="1.4" height="1.4" fill="#e9c019"/><path d="M149.42 240.0v1.600" stroke="#777" stroke-width=".4"/><text transform="translate(133.50 244.10) rotate(62)" font-size="3.950" fill="#444" font-family="Liberation Sans, sans-serif">01/06/2020</text><path d="M177.87 240.0v1.600" stroke="#777" stroke-width=".4"/><text transform="translate(161.95 244.10) rotate(62)" font-size="3.950" fill="#444" font-family="Liberation Sans, sans-serif">02/06/2020</text><path d="M206.32 240.0v1.600" stroke="#777" stroke-width=".4"/><text transform="translate(190.40 244.10) rotate(62)" font-size="3.950" fill="#444" font-family="Liberation Sans, sans-serif">03/06/2020</text><path d="M234.77 240.0v1.600" stroke="#777" stroke-width=".4"/><text transform="translate(218.85 244.10) rotate(62)" font-size="3.950" fill="#444" font-family="Liberation Sans, sans-serif">04/06/2020</text><path d="M263.23 240.0v1.600" stroke="#777" stroke-width=".4"/><text transform="translate(247.30 244.10) rotate(62)" font-size="3.950" fill="#444" font-family="Liberation Sans, sans-serif">05/06/2020</text><path d="M291.68 240.0v1.600" stroke="#777" stroke-width=".4"/><text transform="translate(275.75 244.10) rotate(62)" font-size="3.950" fill="#444" font-family="Liberation Sans, sans-serif">06/06/2020</text><path d="M320.12 240.0v1.600" stroke="#777" stroke-width=".4"/><text transform="translate(304.20 244.10) rotate(62)" font-size="3.950" fill="#444" font-family="Liberation Sans, sans-serif">07/06/2020</text><path d="M348.58 240.0v1.600" stroke="#777" stroke-width=".4"/><text transform="translate(332.65 244.10) rotate(62)" font-size="3.950" fill="#444" font-family="Liberation Sans, sans-serif">08/06/2020</text><path d="M377.02 240.0v1.600" stroke="#777" stroke-width=".4"/><text transform="translate(361.10 244.10) rotate(62)" font-size="3.950" fill="#444" font-family="Liberation Sans, sans-serif">09/06/2020</text><path d="M405.48 240.0v1.600" stroke="#777" stroke-width=".4"/><text transform="translate(389.55 244.10) rotate(62)" font-size="3.950" fill="#444" font-family="Liberation Sans, sans-serif">10/06/2020</text><path d="M433.93 240.0v1.600" stroke="#777" stroke-width=".4"/><text transform="translate(418.00 244.10) rotate(62)" font-size="3.950" fill="#444" font-family="Liberation Sans, sans-serif">11/06/2020</text><path d="M462.38 240.0v1.600" stroke="#777" stroke-width=".4"/><text transform="translate(446.45 244.10) rotate(62)" font-size="3.950" fill="#444" font-family="Liberation Sans, sans-serif">12/06/2020</text><path d="M490.82 240.0v1.600" stroke="#777" stroke-width=".4"/><text transform="translate(474.90 244.10) rotate(62)" font-size="3.950" fill="#444" font-family="Liberation Sans, sans-serif">13/06/2020</text><path d="M519.27 240.0v1.600" stroke="#777" stroke-width=".4"/><text transform="translate(503.35 244.10) rotate(62)" font-size="3.950" fill="#444" font-family="Liberation Sans, sans-serif">14/06/2020</text><path d="M547.73 240.0v1.600" stroke="#777" stroke-width=".4"/><text transform="translate(531.80 244.10) rotate(62)" font-size="3.950" fill="#444" font-family="Liberation Sans, sans-serif">15/06/2020</text><path d="M576.18 240.0v1.600" stroke="#777" stroke-width=".4"/><text transform="translate(560.25 244.10) rotate(62)" font-size="3.950" fill="#444" font-family="Liberation Sans, sans-serif">16/06/2020</text><path d="M604.62 240.0v1.600" stroke="#777" stroke-width=".4"/><text transform="translate(588.70 244.10) rotate(62)" font-size="3.950" fill="#444" font-family="Liberation Sans, sans-serif">17/06/2020</text><path d="M633.07 240.0v1.600" stroke="#777" stroke-width=".4"/><text transform="translate(617.15 244.10) rotate(62)" font-size="3.950" fill="#444" font-family="Liberation Sans, sans-serif">18/06/2020</text><path d="M661.52 240.0v1.600" stroke="#777" stroke-width=".4"/><text transform="translate(645.60 244.10) rotate(62)" font-size="3.950" fill="#444" font-family="Liberation Sans, sans-serif">19/06/2020</text><path d="M689.98 240.0v1.600" stroke="#777" stroke-width=".4"/><text transform="translate(674.05 244.10) rotate(62)" font-size="3.950" fill="#444" font-family="Liberation Sans, sans-serif">20/06/2020</text><path d="M718.43 240.0v1.600" stroke="#777" stroke-width=".4"/><text transform="translate(702.50 244.10) rotate(62)" font-size="3.950" fill="#444" font-family="Liberation Sans, sans-serif">21/06/2020</text><path d="M746.87 240.0v1.600" stroke="#777" stroke-width=".4"/><text transform="translate(730.95 244.10) rotate(62)" font-size="3.950" fill="#444" font-family="Liberation Sans, sans-serif">22/06/2020</text><path d="M775.32 240.0v1.600" stroke="#777" stroke-width=".4"/><text transform="translate(759.40 244.10) rotate(62)" font-size="3.950" fill="#444" font-family="Liberation Sans, sans-serif">23/06/2020</text><rect x="358.9" y="269.7" width="3.400" height="3.400" fill="#2f6fe8"/><text x="364.9" y="273.41" font-size="4.75" letter-spacing="-0.039" fill="#333" font-family="Liberation Sans, sans-serif">Googlebot Search</text><rect x="406.8" y="269.7" width="3.400" height="3.400" fill="#e8201d"/><text x="413.3" y="273.41" font-size="4.75" letter-spacing="-0.061" fill="#333" font-family="Liberation Sans, sans-serif">Yandex Search</text><rect x="448.8" y="269.7" width="3.400" height="3.400" fill="#13807a"/><text x="455.1" y="273.41" font-size="4.75" letter-spacing="-0.202" fill="#333" font-family="Liberation Sans, sans-serif">Bing</text><rect x="468.4" y="269.7" width="3.400" height="3.400" fill="#e6197e"/><text x="474.7" y="273.41" font-size="4.75" letter-spacing="-0.026" fill="#333" font-family="Liberation Sans, sans-serif">Google Image Bot</text><rect x="516.5" y="269.7" width="3.400" height="3.400" fill="#1f9d3a"/><text x="522.7" y="273.41" font-size="4.75" letter-spacing="-0.006" fill="#333" font-family="Liberation Sans, sans-serif">Google AdSense Bot</text><rect x="570.6" y="269.7" width="3.400" height="3.400" fill="#f6a914"/><text x="576.7" y="273.41" font-size="4.75" letter-spacing="0.002" fill="#333" font-family="Liberation Sans, sans-serif">Google AdWords Bot</text><rect x="624.7" y="269.7" width="3.400" height="3.400" fill="#e7bd14"/><text x="631.2" y="273.41" font-size="4.75" letter-spacing="-0.023" fill="#333" font-family="Liberation Sans, sans-serif">Yandex Direct</text><rect x="664.2" y="269.7" width="3.400" height="3.400" fill="#3a18c9"/><text x="670.6" y="273.41" font-size="4.75" letter-spacing="-0.027" fill="#333" font-family="Liberation Sans, sans-serif">Marketing Tools</text><rect x="707.7" y="269.7" width="3.400" height="3.400" fill="#6e6e6e"/><text x="713.9" y="273.41" font-size="4.75" letter-spacing="0.098" fill="#333" font-family="Liberation Sans, sans-serif">Unknown Bots</text></svg>
<div class="b" style="left:96.70px;top:289.40px;width:451.20px;height:140.00px;background:#fff;box-shadow:0 .4px 1.200px rgba(60,60,70,.13);border-radius:1px;"></div>
<span class="t" style="top:294.72px;font-size:5.55px;line-height:6.66px;color:#333;font-weight:bold;left:101.10px;transform:scaleX(0.870);transform-origin:0 50%;">BOTS</span>
<svg class="b" style="left:116.10px;top:294.90px;" width="5.6" height="5.6" viewBox="0 0 5.6 5.6"><circle cx="2.8" cy="2.8" r="2.35" fill="none" stroke="#6d84c8" stroke-width=".55"/><path d="M2.8 2.5v1.7" stroke="#6d84c8" stroke-width=".6"/><circle cx="2.8" cy="1.6" r=".38" fill="#6d84c8"/></svg>
<div class="b" style="left:104.10px;top:305.70px;width:439.80px;height:0.60px;background:#eef0f3;"></div>
<div class="b" style="left:328.00px;top:310.10px;width:216.00px;height:0.50px;background:#eceff3;"></div>
<div class="b" style="left:506.90px;top:294.50px;width:14.80px;height:7.80px;background:#3861b4;border-radius:.8px;"></div>
<span class="t" style="top:296.16px;font-size:4.48px;line-height:5.38px;color:#fff;font-weight:bold;left:414.30px;width:200px;text-align:center;transform:scaleX(0.909);transform-origin:50% 50%;">Visits</span>
<div class="b" style="left:527.30px;top:294.50px;width:16.20px;height:7.80px;background:#fff;box-sizing:border-box;border:.5px solid #dfe3ea;border-radius:.8px;"></div>
<span class="t" style="top:296.09px;font-size:4.59px;line-height:5.51px;color:#7a7f88;left:435.20px;width:200px;text-align:center;transform:scaleX(0.952);transform-origin:50% 50%;">Pages</span>
<svg class="b" style="left:0;top:0" width="745" height="426" viewBox="0 0 745 426"><path d="M208.70 314.80A44.1 44.1 0 0 1 220.07 316.29L215.45 333.59A26.2 26.2 0 0 0 208.70 332.70Z" fill="#3b78f0" stroke="#fff" stroke-width=".45"/><path d="M220.07 316.29A44.1 44.1 0 0 1 227.60 398.74L219.93 382.57A26.2 26.2 0 0 0 215.45 333.59Z" fill="#fb1f0a" stroke="#fff" stroke-width=".45"/><path d="M227.60 398.74A44.1 44.1 0 0 1 226.21 399.37L219.11 382.95A26.2 26.2 0 0 0 219.93 382.57Z" fill="#13807a" stroke="#fff" stroke-width=".45"/><path d="M226.21 399.37A44.1 44.1 0 0 1 223.43 400.47L217.45 383.60A26.2 26.2 0 0 0 219.11 382.95Z" fill="#1a9e48" stroke="#fff" stroke-width=".45"/><path d="M223.43 400.47A44.1 44.1 0 0 1 190.73 399.17L198.02 382.83A26.2 26.2 0 0 0 217.45 383.60Z" fill="#fdb10b" stroke="#fff" stroke-width=".45"/><path d="M190.73 399.17A44.1 44.1 0 0 1 189.42 398.56L197.25 382.46A26.2 26.2 0 0 0 198.02 382.83Z" fill="#e7bd14" stroke="#fff" stroke-width=".45"/><path d="M189.42 398.56A44.1 44.1 0 0 1 178.51 391.05L190.76 378.00A26.2 26.2 0 0 0 197.25 382.46Z" fill="#6a2df0" stroke="#fff" stroke-width=".45"/><path d="M178.51 391.05A44.1 44.1 0 0 1 208.70 314.80L208.70 332.70A26.2 26.2 0 0 0 190.76 378.00Z" fill="#808080" stroke="#fff" stroke-width=".45"/><text x="244.41" y="358.10" font-size="5.300" font-weight="bold" fill="#fff" text-anchor="middle" font-family="Liberation Sans, sans-serif">38.8%</text><text x="207.45" y="396.38" font-size="5.300" font-weight="bold" fill="#fff" text-anchor="middle" font-family="Liberation Sans, sans-serif">12.1%</text><text x="175.84" y="347.99" font-size="5.300" font-weight="bold" fill="#fff" text-anchor="middle" font-family="Liberation Sans, sans-serif">38.0%</text></svg>
<div class="b" style="left:333.20px;top:318.30px;width:1.90px;height:1.90px;background:#2f6fe8;border-radius:50%;"></div>
<span class="t" style="top:316.14px;font-size:5.68px;line-height:6.82px;color:#5b6fb0;left:337.20px;transform:scaleX(.952);transform-origin:0 50%;">Googlebot Search</span>
<span class="t" style="top:316.14px;font-size:5.68px;line-height:6.82px;color:#666;left:515.90px;transform:scaleX(.93);transform-origin:0 50%;">281,441</span>
<div class="b" style="left:328.00px;top:327.30px;width:216.00px;height:0.50px;background:#eef0f4;"></div>
<div class="b" style="left:333.20px;top:334.87px;width:1.90px;height:1.90px;background:#e8201d;border-radius:50%;"></div>
<span class="t" style="top:332.71px;font-size:5.68px;line-height:6.82px;color:#5b6fb0;left:337.20px;transform:scaleX(.952);transform-origin:0 50%;">Yandex Search</span>
<span class="t" style="top:332.71px;font-size:5.68px;line-height:6.82px;color:#666;left:515.90px;transform:scaleX(.93);transform-origin:0 50%;">2,632,059</span>
<div class="b" style="left:328.00px;top:343.87px;width:216.00px;height:0.50px;background:#eef0f4;"></div>
<div class="b" style="left:333.20px;top:351.44px;width:1.90px;height:1.90px;background:#13807a;border-radius:50%;"></div>
<span class="t" style="top:349.28px;font-size:5.68px;line-height:6.82px;color:#5b6fb0;left:337.20px;transform:scaleX(.952);transform-origin:0 50%;">Bing</span>
<span class="t" style="top:349.28px;font-size:5.68px;line-height:6.82px;color:#666;left:515.90px;transform:scaleX(.93);transform-origin:0 50%;">36,984</span>
<div class="b" style="left:328.00px;top:360.44px;width:216.00px;height:0.50px;background:#eef0f4;"></div>
<div class="b" style="left:333.20px;top:368.01px;width:1.90px;height:1.90px;background:#e6197e;border-radius:50%;"></div>
<span class="t" style="top:365.85px;font-size:5.68px;line-height:6.82px;color:#5b6fb0;left:337.20px;transform:scaleX(.952);transform-origin:0 50%;">Google Image Bot</span>
<span class="t" style="top:365.85px;font-size:5.68px;line-height:6.82px;color:#666;left:515.90px;transform:scaleX(.93);transform-origin:0 50%;">2</span>
<div class="b" style="left:328.00px;top:377.01px;width:216.00px;height:0.50px;background:#eef0f4;"></div>
<div class="b" style="left:333.20px;top:384.58px;width:1.90px;height:1.90px;background:#1f9d3a;border-radius:50%;"></div>
<span class="t" style="top:382.42px;font-size:5.68px;line-height:6.82px;color:#5b6fb0;left:337.20px;transform:scaleX(.952);transform-origin:0 50%;">Google AdSense Bot</span>
<span class="t" style="top:382.42px;font-size:5.68px;line-height:6.82px;color:#666;left:515.90px;transform:scaleX(.93);transform-origin:0 50%;">73,275</span>
<div class="b" style="left:328.00px;top:393.58px;width:216.00px;height:0.50px;background:#eef0f4;"></div>
<div class="b" style="left:333.20px;top:401.15px;width:1.90px;height:1.90px;background:#f6a914;border-radius:50%;"></div>
<span class="t" style="top:398.99px;font-size:5.68px;line-height:6.82px;color:#5b6fb0;left:337.20px;transform:scaleX(.952);transform-origin:0 50%;">Google AdWords Bot</span>
<span class="t" style="top:398.99px;font-size:5.68px;line-height:6.82px;color:#666;left:515.90px;transform:scaleX(.93);transform-origin:0 50%;">819,229</span>
<div class="b" style="left:328.00px;top:410.15px;width:216.00px;height:0.50px;background:#eef0f4;"></div>
<div class="b" style="left:333.20px;top:417.72px;width:1.90px;height:1.90px;background:#e7bd14;border-radius:50%;"></div>
<span class="t" style="top:415.56px;font-size:5.68px;line-height:6.82px;color:#5b6fb0;left:337.20px;transform:scaleX(.952);transform-origin:0 50%;">Yandex Direct</span>
<span class="t" style="top:415.56px;font-size:5.68px;line-height:6.82px;color:#666;left:515.90px;transform:scaleX(.93);transform-origin:0 50%;">35,468</span>
<div class="b" style="left:328.00px;top:426.72px;width:216.00px;height:0.50px;background:#eef0f4;"></div>
<div class="b" style="left:556.10px;top:289.40px;width:190.00px;height:140.00px;background:#fff;box-shadow:0 .4px 1.200px rgba(60,60,70,.13);border-radius:1px;"></div>
<span class="t" style="top:294.73px;font-size:5.87px;line-height:7.05px;color:#333;font-weight:bold;left:560.10px;transform:scaleX(0.870);transform-origin:0 50%;">SUBDOMAINS</span>
<svg class="b" style="left:596.80px;top:295.10px;" width="5.6" height="5.6" viewBox="0 0 5.6 5.6"><circle cx="2.8" cy="2.8" r="2.35" fill="none" stroke="#6d84c8" stroke-width=".55"/><path d="M2.8 2.5v1.7" stroke="#6d84c8" stroke-width=".6"/><circle cx="2.8" cy="1.6" r=".38" fill="#6d84c8"/></svg>
<div class="b" style="left:562.20px;top:305.70px;width:184.00px;height:0.60px;background:#eef0f3;"></div>
<svg class="b" style="left:0;top:0" width="745" height="426" viewBox="0 0 745 426"><circle cx="667.8" cy="359" r="35.55" fill="none" stroke="#34c298" stroke-width="16.90"/><text x="667.80" y="396.50" font-size="5.300" font-weight="bold" fill="#fff" text-anchor="middle" font-family="Liberation Sans, sans-serif">100.0%</text></svg>
</div></body></html>
